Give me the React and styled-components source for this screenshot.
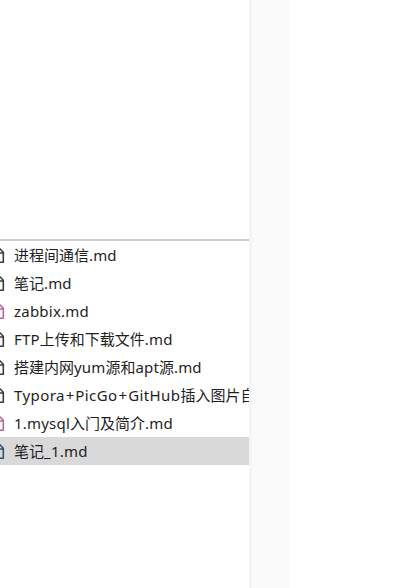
import React from "react";
import styled, { createGlobalStyle } from "styled-components";

const Global = createGlobalStyle`
  body { margin: 0; background: #fff; overflow: hidden; }
`;
const Page = styled.div`
  display: flex;
  height: 588px;
  width: 413px;
`;
const Sidebar = styled.aside`
  width: 249px;
  flex: none;
  overflow: hidden;
  display: flex;
  flex-direction: column;
`;
const UpperPane = styled.div`
  height: 239px;
  flex: none;
  border-bottom: 2px solid #cfcfcf;
`;
const Gutter = styled.div`
  width: 37px;
  flex: none;
  border-left: 3px solid #f5f5f5;
  background: #fafafa;
`;
const List = styled.ul`
  list-style: none;
  margin: 0;
  padding: 0;
`;
const Row = styled.li`
  display: flex;
  align-items: center;
  height: 28px;
  background: ${(p) => (p.$selected ? "#d9d9d9" : "transparent")};
`;
const Icon = styled.svg`
  flex: none;
  width: 14px;
  height: 28px;
  fill: none;
  stroke-width: 1.6;
  stroke-linejoin: round;
  stroke: ${(p) => p.$color};
`;
const Name = styled.span`
  font: 15px/28px "Noto Sans", "Noto Sans CJK SC", sans-serif;
  color: #1e1e1e;
  white-space: nowrap;
`;
const Latin = styled.span`
  letter-spacing: ${(p) => p.$spacing}px;
`;
const Plus = styled.span`
  padding: 0 1px;
`;

const DARK = "#3c3c3c";
const PINK = "#b9659a";
const BLUE = "#2f526e";

const files = [
  { name: "进程间通信.md", color: DARK, spacing: 0.15 },
  { name: "笔记.md", color: DARK, spacing: 0.15 },
  { name: "zabbix.md", color: PINK, spacing: 0.22 },
  { name: "FTP上传和下载文件.md", color: DARK, spacing: 0.2 },
  { name: "搭建内网yum源和apt源.md", color: DARK, spacing: 0.15 },
  { name: "Typora+PicGo+GitHub插入图片自", color: DARK, spacing: 0.41 },
  { name: "1.mysql入门及简介.md", color: PINK, spacing: 0.2 },
  { name: "笔记_1.md", color: BLUE, selected: true, spacing: 0.25 },
];

const renderRun = (run, i, spacing) => {
  if (run === "+") return <Plus key={i}>{run}</Plus>;
  if (/^[\x20-\x7e]/.test(run)) return <Latin key={i} $spacing={spacing}>{run}</Latin>;
  return run;
};

const FileRow = ({ file }) => (
  <Row $selected={file.selected}>
    <Icon viewBox="0 0 14 28" $color={file.color}>
      <path d="M-8 7.5H-0.4L3.3 11.2V21.2H-8M-1 7.5V12H3.3" />
    </Icon>
    <Name>
      {file.name
        .split(/(\+|[\x20-\x2a\x2c-\x7e]+)/)
        .filter(Boolean)
        .map((run, i) => renderRun(run, i, file.spacing))}
    </Name>
  </Row>
);

export default function App() {
  return (
    <Page>
      <Global />
      <Sidebar>
        <UpperPane />
        <List>
          {files.map((file) => <FileRow key={file.name} file={file} />)}
        </List>
      </Sidebar>
      <Gutter />
    </Page>
  );
}
